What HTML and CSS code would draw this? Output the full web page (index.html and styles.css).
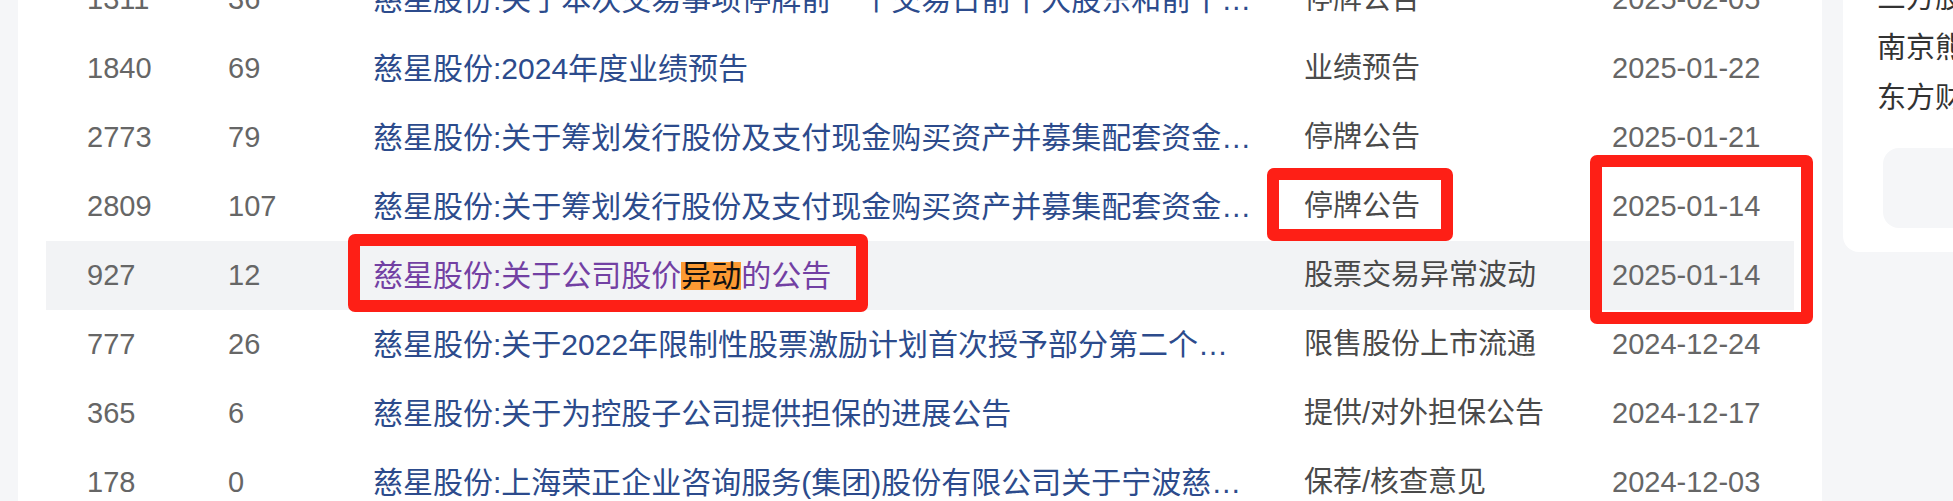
FILE: index.html
```html
<!DOCTYPE html>
<html lang="zh-CN">
<head>
<meta charset="utf-8">
<title>公告列表</title>
<link rel="stylesheet" href="styles.css">
</head>
<body>
<div class="page">
  <main class="main">
    <div class="table">
      <div class="row">
        <div class="cell num">1311</div>
        <div class="cell num">36</div>
        <div class="cell title"><a class="link" href="#">慈星股份:关于本次交易事项停牌前一个交易日前十大股东和前十大流通股东持股情况的公告</a></div>
        <div class="cell type">停牌公告</div>
        <div class="cell date">2025-02-05</div>
      </div>
      <div class="row">
        <div class="cell num">1840</div>
        <div class="cell num">69</div>
        <div class="cell title"><a class="link" href="#">慈星股份:2024年度业绩预告</a></div>
        <div class="cell type">业绩预告</div>
        <div class="cell date">2025-01-22</div>
      </div>
      <div class="row">
        <div class="cell num">2773</div>
        <div class="cell num">79</div>
        <div class="cell title"><a class="link" href="#">慈星股份:关于筹划发行股份及支付现金购买资产并募集配套资金事项的停牌公告</a></div>
        <div class="cell type">停牌公告</div>
        <div class="cell date">2025-01-21</div>
      </div>
      <div class="row">
        <div class="cell num">2809</div>
        <div class="cell num">107</div>
        <div class="cell title"><a class="link" href="#">慈星股份:关于筹划发行股份及支付现金购买资产并募集配套资金事项的停牌进展公告</a></div>
        <div class="cell type">停牌公告</div>
        <div class="cell date">2025-01-14</div>
      </div>
      <div class="row row-hover">
        <div class="cell num">927</div>
        <div class="cell num">12</div>
        <div class="cell title"><a class="link visited" href="#">慈星股份:关于公司股价<mark class="hit">异动</mark>的公告</a></div>
        <div class="cell type">股票交易异常波动</div>
        <div class="cell date">2025-01-14</div>
      </div>
      <div class="row">
        <div class="cell num">777</div>
        <div class="cell num">26</div>
        <div class="cell title"><a class="link" href="#">慈星股份:关于2022年限制性股票激励计划首次授予部分第二个解除限售期解除限售股份上市流通的提示性公告</a></div>
        <div class="cell type">限售股份上市流通</div>
        <div class="cell date">2024-12-24</div>
      </div>
      <div class="row">
        <div class="cell num">365</div>
        <div class="cell num">6</div>
        <div class="cell title"><a class="link" href="#">慈星股份:关于为控股子公司提供担保的进展公告</a></div>
        <div class="cell type">提供/对外担保公告</div>
        <div class="cell date">2024-12-17</div>
      </div>
      <div class="row">
        <div class="cell num">178</div>
        <div class="cell num">0</div>
        <div class="cell title"><a class="link" href="#">慈星股份:上海荣正企业咨询服务(集团)股份有限公司关于宁波慈星股份有限公司相关事项的核查意见</a></div>
        <div class="cell type">保荐/核查意见</div>
        <div class="cell date">2024-12-03</div>
      </div>
    </div>
  </main>
  <aside class="side">
    <div class="side-list">
      <div class="side-item">三方股份</div>
      <div class="side-item">南京熊猫</div>
      <div class="side-item">东方财富</div>
    </div>
    <div class="side-box"></div>
  </aside>
  <div class="mark mark-title"></div>
  <div class="mark mark-type"></div>
  <div class="mark mark-date"></div>
</div>
</body>
</html>
```

FILE: styles.css
```css
html, body {
  margin: 0;
  padding: 0;
}

body {
  width: 1953px;
  height: 501px;
  overflow: hidden;
  background: #f5f6f8;
  font-family: "Liberation Sans", "Noto Sans CJK SC", sans-serif;
  font-size: 30px;
}

.page {
  position: relative;
  display: flex;
  align-items: flex-start;
  gap: 21px;
  padding-left: 18px;
  height: 501px;
}

.main {
  flex: 0 0 1804px;
  box-sizing: border-box;
  height: 501px;
  background: #ffffff;
  padding: 0 28px;
  overflow: hidden;
}

.table {
  margin-top: -35px;
}

.row {
  display: grid;
  grid-template-columns: 141px 145px 931px 308px 223px;
  height: 69px;
}

.row-hover {
  background: #f2f3f5;
}

.cell {
  padding-left: 41px;
  line-height: 69px;
  white-space: nowrap;
  overflow: hidden;
  font-size: 29px;
  min-width: 0;
}

.num {
  color: #666666;
}

.title {
  padding-right: 5px;
  font-size: 30px;
}

.link {
  display: block;
  overflow: hidden;
  white-space: nowrap;
  text-overflow: ellipsis;
  color: #2c4b8c;
  text-decoration: none;
}

.link.visited {
  color: #7240a3;
}

.hit {
  display: inline-block;
  line-height: 28px;
  height: 28px;
  background: #fc9a33;
  color: #111111;
}

.type {
  color: #4a4a4a;
  font-size: 29px;
}

.date {
  color: #666666;
}

.side {
  flex: 0 0 260px;
  height: 252px;
  background: #ffffff;
  border-bottom-left-radius: 16px;
  padding-left: 34px;
  box-sizing: border-box;
  overflow: hidden;
}

.side-list {
  margin-top: -27px;
}

.side-item {
  line-height: 50px;
  font-size: 29px;
  color: #333333;
  white-space: nowrap;
}

.side-box {
  margin-top: 25px;
  margin-left: 6px;
  height: 80px;
  background: #f5f6f8;
  border-radius: 16px 0 0 16px;
}

.mark {
  position: absolute;
  box-sizing: border-box;
  border: 12px solid #fe1f16;
  border-radius: 7px;
}

.mark-title {
  left: 348px;
  top: 234px;
  width: 520px;
  height: 78px;
}

.mark-type {
  left: 1267px;
  top: 168px;
  width: 186px;
  height: 73px;
}

.mark-date {
  left: 1590px;
  top: 155px;
  width: 223px;
  height: 169px;
}
```
